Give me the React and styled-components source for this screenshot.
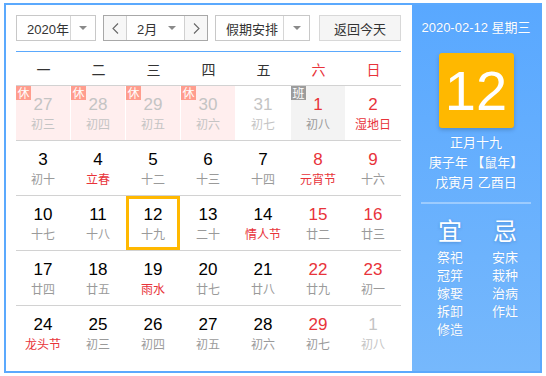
import React from 'react';
import styled, { createGlobalStyle } from 'styled-components';

const Global = createGlobalStyle`
  html, body { margin: 0; padding: 0; background: #fff; }
  body { font-family: "Liberation Sans", "Noto Sans CJK SC", sans-serif; }
`;

const RED = '#e8333a';
const GRAY = '#9a9a9a';
const LIGHT = '#c4c4c4';

const Frame = styled.div`
  box-sizing: border-box;
  width: 538px;
  height: 370px;
  margin: 3px 0 0 4px;
  border: 2px solid #5ba9fd;
  display: flex;
`;

const Main = styled.div`
  width: 406px;
  box-sizing: border-box;
  padding: 10px 11px 0 10px;
`;

const Toolbar = styled.div`
  display: flex;
  align-items: center;
  height: 26px;
  font-size: 13px;
  color: #333;
`;

const Select = styled.div`
  display: flex;
  box-sizing: border-box;
  height: 26px;
  width: ${p => p.$w}px;
  margin-right: ${p => p.$mr || 0}px;
  border: 1px solid ${p => p.$dark ? '#a8a8a8' : '#c8c8c8'};
  background: #fff;
`;

const Label = styled.div`
  flex: 1;
  min-width: 0;
  display: flex;
  align-items: center;
  padding-left: 10px;
  white-space: nowrap;
`;

const CaretBox = styled.div`
  flex: none;
  width: ${p => p.$w || 24}px;
  border-left: ${p => p.$divider ? '1px solid #d6d6d6' : 'none'};
  display: flex;
  align-items: center;
  justify-content: center;
`;

const Caret = styled.span`
  width: 0;
  height: 0;
  border-left: 4px solid transparent;
  border-right: 4px solid transparent;
  border-top: 4px solid #8a8a8a;
`;

const NavBtn = styled.div`
  flex: none;
  width: 22px;
  display: flex;
  align-items: center;
  justify-content: center;
  background: #f7f7f7;
  border-${p => p.$side}: 1px solid #d0d0d0;
`;

const TodayBtn = styled.div`
  box-sizing: border-box;
  width: 82px;
  height: 26px;
  margin-left: 2px;
  display: flex;
  align-items: center;
  justify-content: center;
  background: #f5f5f5;
  border: 1px solid #d8d8d8;
`;

const BlueLine = styled.div`
  height: 1px;
  background: #5ba9fd;
  margin-top: 10px;
`;

const WeekHead = styled.div`
  display: grid;
  grid-template-columns: repeat(7, 55px);
  height: 33px;
  align-items: center;
  font-size: 14px;
  font-family: "Noto Sans CJK SC", sans-serif;
`;

const WeekDay = styled.div`
  text-align: center;
  color: ${p => p.$red ? RED : '#333'};
`;

const Row = styled.div`
  display: grid;
  grid-template-columns: repeat(7, 55px);
  box-sizing: border-box;
  height: 55px;
  border-top: 1px solid #d2d2d2;
`;

const Cell = styled.div`
  position: relative;
  box-sizing: border-box;
  height: 54px;
  border-right: 1px solid transparent;
  background-clip: padding-box;
  background-color: ${p => p.$bg || 'transparent'};
  box-shadow: ${p => p.$sel ? 'inset 0 0 0 3px #ffb800' : 'none'};
  display: flex;
  flex-direction: column;
  align-items: center;
  justify-content: center;
`;

const Num = styled.div`
  font-size: 17px;
  line-height: 20px;
  color: ${p => p.$c};
`;

const Lunar = styled.div`
  font-size: 12px;
  line-height: 16px;
  margin-top: 1px;
  color: ${p => p.$c};
  font-family: "Noto Sans CJK SC", sans-serif;
`;

const Badge = styled.span`
  position: absolute;
  top: 0;
  left: 0;
  width: 15px;
  height: 14px;
  font-size: 12px;
  line-height: 14px;
  text-align: center;
  color: #fff;
  background: ${p => p.$kind === 'rest' ? '#ff9d8e' : '#9c9c9c'};
  font-family: "Noto Sans CJK SC", sans-serif;
`;

const Side = styled.div`
  width: 128px;
  background: linear-gradient(180deg, #59a8ff 0%, #76b8fc 100%);
  color: #fff;
  display: flex;
  flex-direction: column;
  align-items: center;
  padding-top: 14px;
  text-shadow: 0 0 1px rgba(40, 90, 160, 0.25);
`;

const DateLine = styled.div`
  font-size: 13px;
  line-height: 18px;
  white-space: nowrap;
`;

const DayBox = styled.div`
  width: 75px;
  height: 75px;
  margin-top: 16px;
  background: #ffb800;
  border-radius: 3px;
  box-shadow: 0 2px 4px rgba(0, 0, 0, 0.18);
  font-size: 56px;
  line-height: 75px;
  text-align: center;
  text-shadow: none;
`;

const InfoLine = styled.div`
  font-size: 13px;
  line-height: 20px;
  margin-top: ${p => p.$first ? 5 : 0}px;
  white-space: nowrap;
`;

const Sep = styled.div`
  width: 110px;
  height: 2px;
  margin-top: 9px;
  background: rgba(255, 255, 255, 0.35);
`;

const YiJi = styled.div`
  display: grid;
  grid-template-columns: 55px 55px;
  margin-top: 13px;
  margin-left: 3px;
`;

const Col = styled.div`
  display: flex;
  flex-direction: column;
  align-items: center;
`;

const Big = styled.div`
  font-size: 24px;
  line-height: 30px;
  margin-bottom: 2px;
  text-shadow: 0 1px 3px rgba(30, 80, 150, 0.35);
`;

const Item = styled.div`
  font-size: 13px;
  line-height: 18px;
`;

const Chevron = ({ dir }) => (
  <svg width="7" height="11" viewBox="0 0 7 11">
    <polyline
      points={dir === 'l' ? '6,0.5 1,5.5 6,10.5' : '1,0.5 6,5.5 1,10.5'}
      fill="none"
      stroke="#666"
      strokeWidth="1.1"
    />
  </svg>
);

// each cell: [num, lunar, numColor, lunarColor, bg, badge, selected]
const rows = [
  [
    ['27', '初三', LIGHT, LIGHT, '#ffeeee', 'rest'],
    ['28', '初四', LIGHT, LIGHT, '#ffeeee', 'rest'],
    ['29', '初五', LIGHT, LIGHT, '#ffeeee', 'rest'],
    ['30', '初六', LIGHT, LIGHT, '#ffeeee', 'rest'],
    ['31', '初七', LIGHT, LIGHT],
    ['1', '初八', RED, GRAY, '#f3f3f3', 'work'],
    ['2', '湿地日', RED, RED],
  ],
  [
    ['3', '初十', '#000', GRAY],
    ['4', '立春', '#000', RED],
    ['5', '十二', '#000', GRAY],
    ['6', '十三', '#000', GRAY],
    ['7', '十四', '#000', GRAY],
    ['8', '元宵节', RED, RED],
    ['9', '十六', RED, GRAY],
  ],
  [
    ['10', '十七', '#000', GRAY],
    ['11', '十八', '#000', GRAY],
    ['12', '十九', '#000', GRAY, null, null, true],
    ['13', '二十', '#000', GRAY],
    ['14', '情人节', '#000', RED],
    ['15', '廿二', RED, GRAY],
    ['16', '廿三', RED, GRAY],
  ],
  [
    ['17', '廿四', '#000', GRAY],
    ['18', '廿五', '#000', GRAY],
    ['19', '雨水', '#000', RED],
    ['20', '廿七', '#000', GRAY],
    ['21', '廿八', '#000', GRAY],
    ['22', '廿九', RED, GRAY],
    ['23', '初一', RED, GRAY],
  ],
  [
    ['24', '龙头节', '#000', RED],
    ['25', '初三', '#000', GRAY],
    ['26', '初四', '#000', GRAY],
    ['27', '初五', '#000', GRAY],
    ['28', '初六', '#000', GRAY],
    ['29', '初七', RED, GRAY],
    ['1', '初八', LIGHT, LIGHT],
  ],
];

const weekdays = ['一', '二', '三', '四', '五', '六', '日'];

export default function App() {
  return (
    <>
      <Global />
      <Frame>
        <Main>
          <Toolbar>
            <Select $w={80} $mr={7}>
              <Label>2020年</Label>
              <CaretBox $divider><Caret /></CaretBox>
            </Select>
            <Select $w={105} $mr={7} $dark>
              <NavBtn $side="right"><Chevron dir="l" /></NavBtn>
              <Label>2月</Label>
              <CaretBox><Caret /></CaretBox>
              <NavBtn $side="left"><Chevron dir="r" /></NavBtn>
            </Select>
            <Select $w={95} $mr={7}>
              <Label>假期安排</Label>
              <CaretBox $w={25} $divider><Caret /></CaretBox>
            </Select>
            <TodayBtn>返回今天</TodayBtn>
          </Toolbar>
          <BlueLine />
          <WeekHead>
            {weekdays.map((d, i) => (
              <WeekDay key={d} $red={i >= 5}>{d}</WeekDay>
            ))}
          </WeekHead>
          {rows.map((r, ri) => (
            <Row key={ri}>
              {r.map(([n, l, nc, lc, bg, badge, sel], ci) => (
                <Cell key={ci} $bg={bg} $sel={sel}>
                  {badge && <Badge $kind={badge}>{badge === 'rest' ? '休' : '班'}</Badge>}
                  <Num $c={nc}>{n}</Num>
                  <Lunar $c={lc}>{l}</Lunar>
                </Cell>
              ))}
            </Row>
          ))}
        </Main>
        <Side>
          <DateLine>2020-02-12 星期三</DateLine>
          <DayBox>12</DayBox>
          <InfoLine $first>正月十九</InfoLine>
          <InfoLine>庚子年 【鼠年】</InfoLine>
          <InfoLine>戊寅月 乙酉日</InfoLine>
          <Sep />
          <YiJi>
            <Col>
              <Big>宜</Big>
              <Item>祭祀</Item>
              <Item>冠笄</Item>
              <Item>嫁娶</Item>
              <Item>拆卸</Item>
              <Item>修造</Item>
            </Col>
            <Col>
              <Big>忌</Big>
              <Item>安床</Item>
              <Item>栽种</Item>
              <Item>治病</Item>
              <Item>作灶</Item>
            </Col>
          </YiJi>
        </Side>
      </Frame>
    </>
  );
}
